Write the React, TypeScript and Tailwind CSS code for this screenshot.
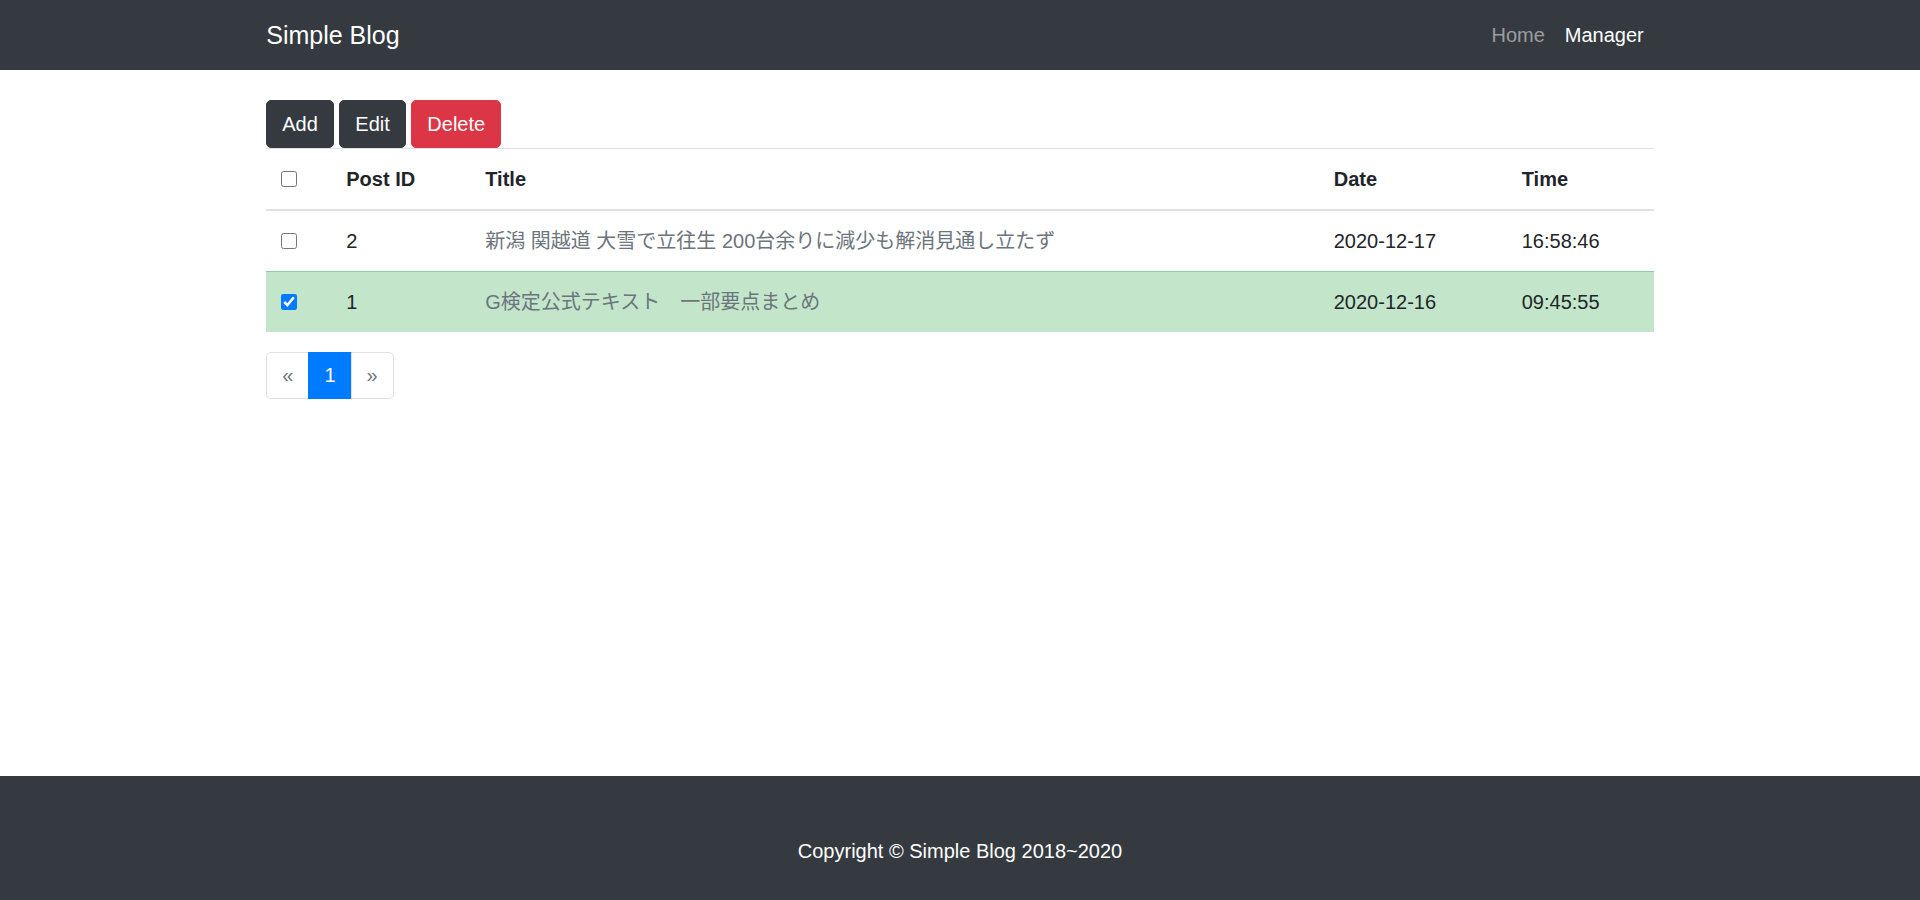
const FONT = "font-['Liberation_Sans','Noto_Sans_CJK_JP',sans-serif]";

type Post = { id: number; title: string; date: string; time: string; checked: boolean };

const POSTS: Post[] = [
  {
    id: 2,
    title: "新潟 関越道 大雪で立往生 200台余りに減少も解消見通し立たず",
    date: "2020-12-17",
    time: "16:58:46",
    checked: false,
  },
  {
    id: 1,
    title: "G検定公式テキスト　一部要点まとめ",
    date: "2020-12-16",
    time: "09:45:55",
    checked: true,
  },
];

const Checkbox = ({ checked }: { checked: boolean }) => (
  <input
    type="checkbox"
    defaultChecked={checked}
    className="block size-4 accent-[#007bff]"
  />
);

const Navbar = () => (
  <nav className="h-[70px] bg-[#343a40]">
    <div className="mx-auto flex h-full w-[1387.5px] items-center justify-between">
      <a className="text-[25px] leading-[35px] text-white">Simple Blog</a>
      <ul className="flex text-[20px] leading-[30px]">
        <li>
          <a className="px-[10px] text-white/50">Home</a>
        </li>
        <li>
          <a className="px-[10px] text-white">Manager</a>
        </li>
      </ul>
    </div>
  </nav>
);

const btn = "rounded-[5px] border px-[15px] py-[8px] text-[20px] leading-[30px] text-white";

const Toolbar = () => (
  <div className="flex gap-[5.5px]">
    <button type="button" className={`${btn} border-[#343a40] bg-[#343a40]`}>
      Add
    </button>
    <button type="button" className={`${btn} border-[#343a40] bg-[#343a40]`}>
      Edit
    </button>
    <button type="button" className={`${btn} border-[#dc3545] bg-[#dc3545]`}>
      Delete
    </button>
  </div>
);

const th = "border-t border-b-2 border-[#dee2e6] p-[15px] font-bold";

const PostTable = () => (
  <table className="w-full border-collapse text-left text-[20px] leading-[30px] text-[#212529]">
    <colgroup>
      <col className="w-[65px]" />
      <col className="w-[139px]" />
      <col />
      <col className="w-[188px]" />
      <col className="w-[147px]" />
    </colgroup>
    <thead>
      <tr>
        <th className={th}>
          <Checkbox checked={false} />
        </th>
        <th className={th}>Post ID</th>
        <th className={th}>Title</th>
        <th className={th}>Date</th>
        <th className={th}>Time</th>
      </tr>
    </thead>
    <tbody>
      {POSTS.map((post) => {
        const cell = post.checked
          ? "border-t border-[#8fd19e] bg-[#c3e6cb] px-[15px] py-[15px]"
          : "border-t border-[#dee2e6] px-[15px] py-[15px]";
        return (
          <tr key={post.id}>
            <td className={cell}>
              <Checkbox checked={post.checked} />
            </td>
            <td className={cell}>{post.id}</td>
            <td className={cell}>
              <a className="text-[#6c757d]">{post.title}</a>
            </td>
            <td className={cell}>{post.date}</td>
            <td className={cell}>{post.time}</td>
          </tr>
        );
      })}
    </tbody>
  </table>
);

const Pagination = () => (
  <ul className="mt-[20px] flex text-[20px] leading-[25px]">
    <li className="rounded-l-[5px] border border-[#dee2e6] bg-white px-[15px] py-[10px] text-[#6c757d]">
      «
    </li>
    <li className="-ml-px border border-[#007bff] bg-[#007bff] px-[15px] py-[10px] text-white">
      1
    </li>
    <li className="-ml-px rounded-r-[5px] border border-[#dee2e6] bg-white px-[15px] py-[10px] text-[#6c757d]">
      »
    </li>
  </ul>
);

export default function App() {
  return (
    <div className={`flex min-h-screen flex-col bg-white ${FONT}`}>
      <Navbar />
      <main className="flex-1">
        <div className="mx-auto w-[1387.5px] pt-[30px]">
          <Toolbar />
          <PostTable />
          <Pagination />
        </div>
      </main>
      <footer className="flex h-[124px] justify-center bg-[#343a40] pt-[60px]">
        <p className="text-[20px] leading-[30px] text-white">Copyright © Simple Blog 2018~2020</p>
      </footer>
    </div>
  );
}
